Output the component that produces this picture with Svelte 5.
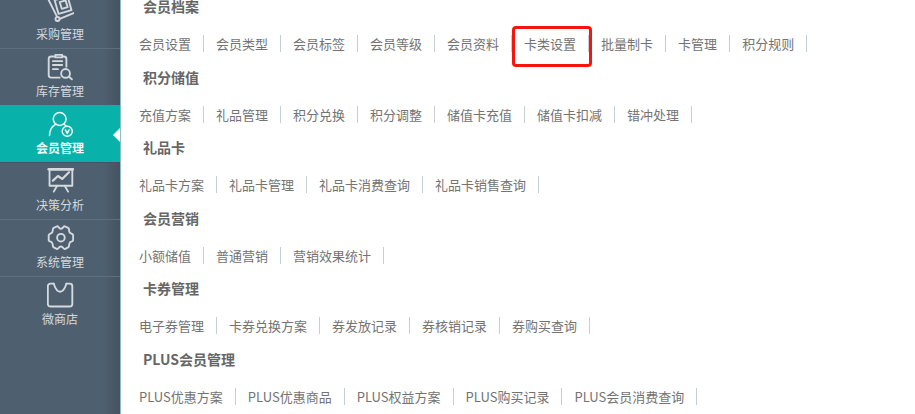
<script>
	const navItems = [
		{ label: '采购管理', icon: 'cart' },
		{ label: '库存管理', icon: 'stock' },
		{ label: '会员管理', icon: 'member', active: true },
		{ label: '决策分析', icon: 'chart' },
		{ label: '系统管理', icon: 'gear' },
		{ label: '微商店', icon: 'shop' }
	];

	const sections = [
		{ title: '会员档案', links: ['会员设置', '会员类型', '会员标签', '会员等级', '会员资料', '卡类设置', '批量制卡', '卡管理', '积分规则'] },
		{ title: '积分储值', links: ['充值方案', '礼品管理', '积分兑换', '积分调整', '储值卡充值', '储值卡扣减', '错冲处理'] },
		{ title: '礼品卡', links: ['礼品卡方案', '礼品卡管理', '礼品卡消费查询', '礼品卡销售查询'] },
		{ title: '会员营销', links: ['小额储值', '普通营销', '营销效果统计'] },
		{ title: '卡券管理', links: ['电子券管理', '卡券兑换方案', '券发放记录', '券核销记录', '券购买查询'] },
		{ title: 'PLUS会员管理', links: ['PLUS优惠方案', 'PLUS优惠商品', 'PLUS权益方案', 'PLUS购买记录', 'PLUS会员消费查询'] }
	];
</script>

<div class="page">
	<nav class="sidebar">
		<ul>
			{#each navItems as item}
				<li class:active={item.active}>
					<svg class="icon" viewBox="0 0 32 32" fill="none" stroke="currentColor" stroke-width="2.2" stroke-linecap="round" stroke-linejoin="round">
						{#if item.icon === 'cart'}
							<path d="M2 3.600L12 23.500" />
							<path d="M15 26l16.500-7" />
							<path d="M9 3.600L24.600 0l4.400 15.500-15.300 4.500z" />
							<path d="M15 6l7-2 2.500 8-7 2z" />
							<circle cx="12.500" cy="26" r="2.400" />
						{:else if item.icon === 'stock'}
							<path d="M9 3H5a3 3 0 0 0-3 3v19a3 3 0 0 0 3 3h10" />
							<path d="M10 1h8v3h-8zM19 3h1a3 3 0 0 1 3 3v9" />
							<path d="M7 8.500h11M7 13h11M7 18h6" />
							<circle cx="22" cy="23" r="5.200" />
							<path d="M26 27l3.500 3" />
						{:else if item.icon === 'member'}
							<g stroke-width="1.800">
								<circle cx="15" cy="9.500" r="7.600" />
								<path d="M3 29c0-6 3-11 7.500-13.500M19.500 15.500c1 .5 2 1 3 2" />
								<circle cx="24" cy="24" r="6" />
								<path d="M21.800 22.500l2.200 4 2.200-4" />
							</g>
						{:else if item.icon === 'chart'}
							<path d="M3 2h27v19H3z" />
							<path d="M2 1.500h29" stroke-width="3" />
							<path d="M7 15l6-5.500 5 3.500 8-8" stroke-width="2.600" />
							<path d="M12 21l-4 7M21 21l4 7" />
						{:else if item.icon === 'gear'}
							<path d="M12 1.500C14 1.500 13.500 4.500 16.500 4.500C19.500 4.500 19 1.500 21 1.500L25 3.500C27 4.500 25.500 7 27 9C28 10.500 30.500 10 31 12V18C30.500 20 28 19.500 27 21C25.500 23 27 25.500 25 26.500L21 28.500C19 28.500 19.500 25.500 16.500 25.500C13.500 25.500 14 28.500 12 28.500L8 26.500C6 25.500 7.500 23 6 21C5 19.500 2.500 20 2 18V12C2.500 10 5 10.500 6 9C7.500 7 6 4.500 8 3.500Z" />
							<circle cx="16.500" cy="15" r="4.500" />
						{:else}
							<path d="M8 2H4a3 3 0 0 0-3 3v21a3 3 0 0 0 3 3h23a3 3 0 0 0 3-3V5a3 3 0 0 0-3-3h-4" />
							<path d="M8 2c1 3 3 9.500 7.500 9.500S22 5 23 2" />
						{/if}
					</svg>
					<span>{item.label}</span>
					{#if item.active}<i class="arrow"></i>{/if}
				</li>
			{/each}
		</ul>
	</nav>

	<main class="content">
		{#each sections as section}
			<section>
				<h3>{section.title}</h3>
				<div class="links">
					{#each section.links as link}
						<a href="#top">{link}</a>
					{/each}
				</div>
			</section>
		{/each}
		<div class="highlight"></div>
	</main>
</div>

<style>
	:global(body) {
		background: #fff;
		overflow: hidden;
	}

	.page {
		display: flex;
		width: 915px;
		height: 414px;
		overflow: hidden;
		font-family: "Noto Sans CJK SC", "Open Sans", sans-serif;
	}

	.sidebar {
		flex: none;
		width: 120px;
		height: 414px;
		background: linear-gradient(90deg, #4e6070 85%, #46535f 100%);
		border-right: 1px solid #8fbcc9;
		overflow: hidden;
	}

	.sidebar ul {
		list-style: none;
		margin: -9px 0 0;
		padding: 0;
	}

	.sidebar li {
		position: relative;
		display: flex;
		flex-direction: column;
		align-items: center;
		height: 57px;
		padding-top: 5px;
		box-sizing: border-box;
		color: #d5dade;
		font-size: 12px;
		line-height: 16px;
		border-top: 1px solid #5b6f81;
	}

	.sidebar li.active {
		background: #08b2aa;
		color: #f2fbfa;
		font-weight: 700;
		border-top-color: #08b2aa;
	}

	.sidebar li.active + li {
		border-top-color: #46535f;
	}

	.icon {
		flex: none;
		width: 27px;
		height: 27px;
		margin-bottom: 2px;
	}

	.arrow {
		position: absolute;
		right: -1px;
		top: 21px;
		border: 8px solid transparent;
		border-left: 0;
		border-right-color: #fff;
	}

	.content {
		position: relative;
		flex: 1;
		margin-top: -7px;
	}

	section {
		height: 70.500px;
		box-sizing: border-box;
	}

	h3 {
		margin: 0;
		padding-left: 22px;
		font-size: 14px;
		line-height: 26px;
		font-weight: 700;
		color: #666;
	}

	.links {
		display: flex;
		margin-top: 16px;
		padding-left: 18px;
	}

	.links a {
		padding: 0 12px;
		border-right: 1px solid #c5ced4;
		color: #737373;
		font-size: 13px;
		line-height: 17px;
		text-decoration: none;
		white-space: nowrap;
	}

	.links a:first-child {
		padding-left: 0;
	}

	.highlight {
		position: absolute;
		left: 391px;
		top: 33px;
		width: 80px;
		height: 41px;
		box-sizing: border-box;
		border: 3px solid #f5140f;
		border-radius: 4px;
	}
</style>
